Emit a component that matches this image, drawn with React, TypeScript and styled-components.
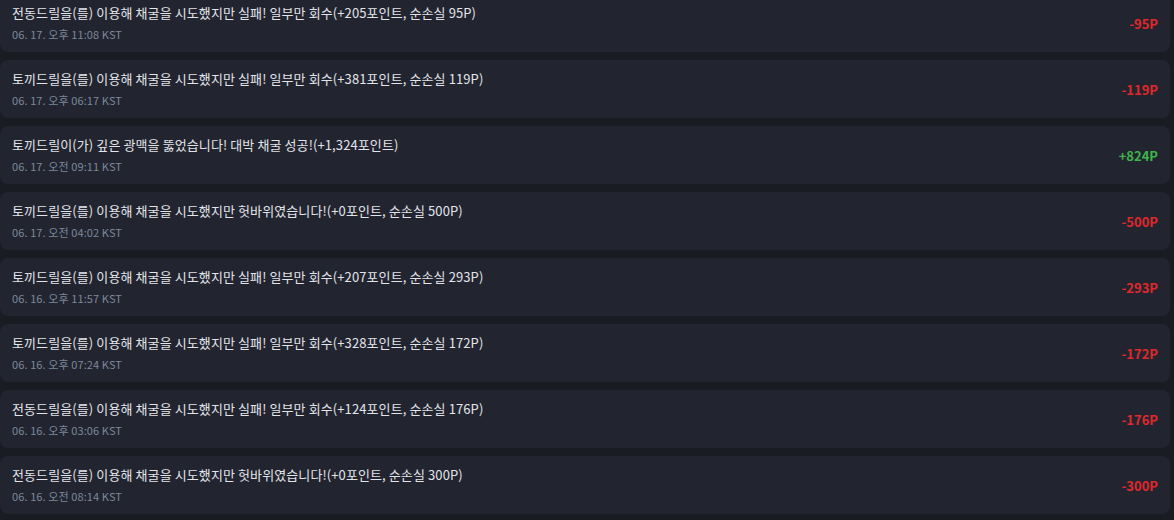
import styled, { createGlobalStyle } from 'styled-components';

type Entry = {
  message: string;
  time: string;
  amount: number;
};

const entries: Entry[] = [
  { message: '전동드릴을(를) 이용해 채굴을 시도했지만 실패! 일부만 회수(+205포인트, 순손실 95P)', time: '06. 17. 오후 11:08 KST', amount: -95 },
  { message: '토끼드릴을(를) 이용해 채굴을 시도했지만 실패! 일부만 회수(+381포인트, 순손실 119P)', time: '06. 17. 오후 06:17 KST', amount: -119 },
  { message: '토끼드릴이(가) 깊은 광맥을 뚫었습니다! 대박 채굴 성공!(+1,324포인트)', time: '06. 17. 오전 09:11 KST', amount: 824 },
  { message: '토끼드릴을(를) 이용해 채굴을 시도했지만 헛바위였습니다!(+0포인트, 순손실 500P)', time: '06. 17. 오전 04:02 KST', amount: -500 },
  { message: '토끼드릴을(를) 이용해 채굴을 시도했지만 실패! 일부만 회수(+207포인트, 순손실 293P)', time: '06. 16. 오후 11:57 KST', amount: -293 },
  { message: '토끼드릴을(를) 이용해 채굴을 시도했지만 실패! 일부만 회수(+328포인트, 순손실 172P)', time: '06. 16. 오후 07:24 KST', amount: -172 },
  { message: '전동드릴을(를) 이용해 채굴을 시도했지만 실패! 일부만 회수(+124포인트, 순손실 176P)', time: '06. 16. 오후 03:06 KST', amount: -176 },
  { message: '전동드릴을(를) 이용해 채굴을 시도했지만 헛바위였습니다!(+0포인트, 순손실 300P)', time: '06. 16. 오전 08:14 KST', amount: -300 },
];

const GlobalStyle = createGlobalStyle`
  html, body {
    margin: 0;
    padding: 0;
    background: #1a1c23;
    overflow: hidden;
  }
  body {
    font-family: 'Noto Sans CJK KR', 'Noto Sans', sans-serif;
  }
`;

const App: React.FC = () => {
  return (
    <>
      <GlobalStyle />
      <HistoryList>
        {entries.map((entry, i) => (
          <HistoryCard key={i}>
            <Info>
              <Message>{entry.message}</Message>
              <Time>{entry.time}</Time>
            </Info>
            <Amount $positive={entry.amount > 0}>
              {entry.amount > 0 ? '+' : ''}
              {entry.amount}P
            </Amount>
          </HistoryCard>
        ))}
      </HistoryList>
    </>
  );
};

export default App;

const HistoryList = styled.div`
  display: flex;
  flex-direction: column;
  gap: 8px;
  margin-top: -6px;
  width: 1170px;
`;

const HistoryCard = styled.div`
  display: flex;
  align-items: center;
  justify-content: space-between;
  height: 58px;
  box-sizing: border-box;
  padding: 0 12px;
  background: #222530;
  border-radius: 8px;
`;

const Info = styled.div`
  display: flex;
  flex-direction: column;
  gap: 4px;
  padding-bottom: 1px;
`;

const Message = styled.div`
  color: #e2e4ea;
  font-size: 13px;
  line-height: 18px;
  letter-spacing: 0.1px;
`;

const Time = styled.div`
  color: #7d889b;
  font-size: 11px;
  line-height: 16px;
  letter-spacing: 0.1px;
`;

const Amount = styled.div<{ $positive: boolean }>`
  color: ${({ $positive }) => ($positive ? '#3fb44a' : '#e0282c')};
  font-size: 13px;
  font-weight: 700;
`;
